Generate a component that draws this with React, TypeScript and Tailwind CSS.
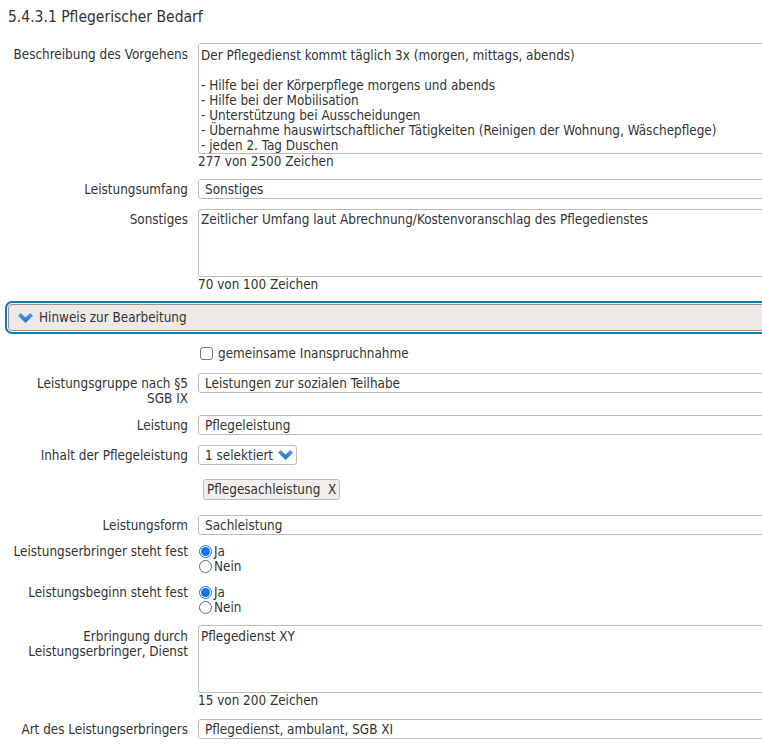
import React from "react";

const FONT = { fontFamily: '"DejaVu Sans Condensed", "DejaVu Sans", sans-serif' };

function Chevron({ className = "" }: { className?: string }) {
  return (
    <svg className={className} width="15" height="10" viewBox="0 0 15 10">
      <defs>
        <linearGradient id="chg" x1="0" y1="0" x2="0" y2="1">
          <stop offset="0" stopColor="#5aa2ea" />
          <stop offset="1" stopColor="#1c6cc4" />
        </linearGradient>
      </defs>
      <path d="M0.3 2.7 L2.7 0.2 L7.5 4.8 L12.3 0.2 L14.7 2.7 L7.5 9.8 Z" fill="url(#chg)" strokeLinejoin="round" stroke="#2a78cc" strokeWidth="0.4" />
    </svg>
  );
}

function Label({ children, className = "" }: { children: React.ReactNode; className?: string }) {
  return (
    <div className={`w-[180px] shrink-0 text-right text-[#333] ${className}`}>{children}</div>
  );
}

function Row({ label, children, className = "", labelClass = "pt-[3px]" }: { label?: React.ReactNode; children: React.ReactNode; className?: string; labelClass?: string }) {
  return (
    <div className={`flex gap-[10px] ${className}`}>
      <Label className={labelClass}>{label}</Label>
      <div className="flex flex-col">{children}</div>
    </div>
  );
}

function Input({ value }: { value: string }) {
  return (
    <div className="h-[20px] w-[620px] rounded-[3px] border border-[#c2bab5] bg-white pl-[6px] leading-[19px] text-[#333]">
      {value}
    </div>
  );
}

function TextArea({ lines, h, pt = "pt-[3px]" }: { lines: string[]; h: string; pt?: string }) {
  return (
    <div className={`${h} ${pt} w-[620px] rounded-[3px] border border-[#c2bab5] bg-white px-[2px] text-[#333]`}>
      {lines.map((l, i) => (
        <div key={i} className="h-[15px] whitespace-pre">{l}</div>
      ))}
    </div>
  );
}

function Counter({ text }: { text: string }) {
  return <div className="h-[15px] text-[#333]">{text}</div>;
}

function Radio({ checked, label }: { checked: boolean; label: string }) {
  return (
    <div className="flex h-[15px] items-center">
      {checked ? (
        <span className="ml-[1px] flex h-[13px] w-[13px] items-center justify-center rounded-full border border-[#1a73e8] bg-white">
          <span className="h-[9px] w-[9px] rounded-full bg-[#1a73e8]" />
        </span>
      ) : (
        <span className="ml-[1px] h-[13px] w-[13px] rounded-full border border-[#6b6b6b] bg-white" />
      )}
      <span className="ml-[2px] text-[#333]">{label}</span>
    </div>
  );
}

export default function App() {
  return (
    <div className="w-[762px] overflow-hidden bg-white text-[13.4px] leading-[15px]" style={FONT}>
      <div className="w-[900px] pb-[20px]">
        <div className="pl-[8px] pt-[8px] text-[15.5px] leading-[18px] text-[#333]">5.4.3.1 Pflegerischer Bedarf</div>

        <div className="mt-[17px] pl-[8px]">
          <Row label="Beschreibung des Vorgehens" labelClass="pt-[4px]">
            <TextArea
              h="h-[111px]"
              pt="pt-[4px]"
              lines={[
                "Der Pflegedienst kommt täglich 3x (morgen, mittags, abends)",
                "",
                "- Hilfe bei der Körperpflege morgens und abends",
                "- Hilfe bei der Mobilisation",
                "- Unterstützung bei Ausscheidungen",
                "- Übernahme hauswirtschaftlicher Tätigkeiten (Reinigen der Wohnung, Wäschepflege)",
                "- jeden 2. Tag Duschen",
              ]}
            />
            <Counter text="277 von 2500 Zeichen" />
          </Row>

          <Row label="Leistungsumfang" className="mt-[10px]" labelClass="pt-[3px]">
            <Input value="Sonstiges" />
          </Row>

          <Row label="Sonstiges" className="mt-[10px]" labelClass="pt-[3px]">
            <TextArea h="h-[68px]" pt="pt-[2px]" lines={["Zeitlicher Umfang laut Abrechnung/Kostenvoranschlag des Pflegedienstes"]} />
            <Counter text="70 von 100 Zeichen" />
          </Row>
        </div>

        <div className="mt-[12px] pl-[8px]">
          <div className="flex h-[27px] w-[800px] items-center rounded-[4px] border border-[#9c8e86] bg-[#ede9e6] pl-[9px] outline-2 outline-offset-1 outline-[#0b7db5]">
            <Chevron />
            <span className="ml-[6px] text-[#333]">Hinweis zur Bearbeitung</span>
          </div>
        </div>

        <div className="pl-[8px]">
          <Row label="" className="mt-[15px]" labelClass="">
            <div className="flex h-[15px] items-center">
              <span className="ml-[2px] h-[13px] w-[13px] rounded-[3px] border border-[#767676] bg-white" />
              <span className="ml-[5px] text-[#333]">gemeinsame Inanspruchnahme</span>
            </div>
          </Row>

          <Row label={<>Leistungsgruppe nach §5<br />SGB IX</>} className="mt-[12px]">
            <Input value="Leistungen zur sozialen Teilhabe" />
          </Row>

          <Row label="Leistung" className="mt-[9px]">
            <Input value="Pflegeleistung" />
          </Row>

          <Row label="Inhalt der Pflegeleistung" className="mt-[10px]">
            <div className="flex h-[20px] w-[99px] items-center rounded-[3px] border border-[#c2bab5] bg-white pl-[6px] text-[#333]">
              <span>1 selektiert</span>
              <Chevron className="ml-[5px]" />
            </div>
          </Row>

          <Row label="" className="mt-[14px]" labelClass="">
            <div className="ml-[5px] flex h-[21px] items-center rounded-[3px] border border-[#c2bab5] bg-[#f1eeec] px-[3px] text-[#333]">
              Pflegesachleistung&nbsp;&nbsp;X
            </div>
          </Row>

          <Row label="Leistungsform" className="mt-[15px]">
            <Input value="Sachleistung" />
          </Row>

          <Row label="Leistungserbringer steht fest" className="mt-[9px]" labelClass="">
            <Radio checked label="Ja" />
            <Radio checked={false} label="Nein" />
          </Row>

          <Row label="Leistungsbeginn steht fest" className="mt-[11px]" labelClass="">
            <Radio checked label="Ja" />
            <Radio checked={false} label="Nein" />
          </Row>

          <Row label={<>Erbringung durch<br />Leistungserbringer, Dienst</>} className="mt-[10px]" labelClass="pt-[4px]">
            <TextArea h="h-[68px]" lines={["Pflegedienst XY"]} />
            <Counter text="15 von 200 Zeichen" />
          </Row>

          <Row label="Art des Leistungserbringers" className="mt-[11px]">
            <Input value="Pflegedienst, ambulant, SGB XI" />
          </Row>
        </div>
      </div>
    </div>
  );
}
